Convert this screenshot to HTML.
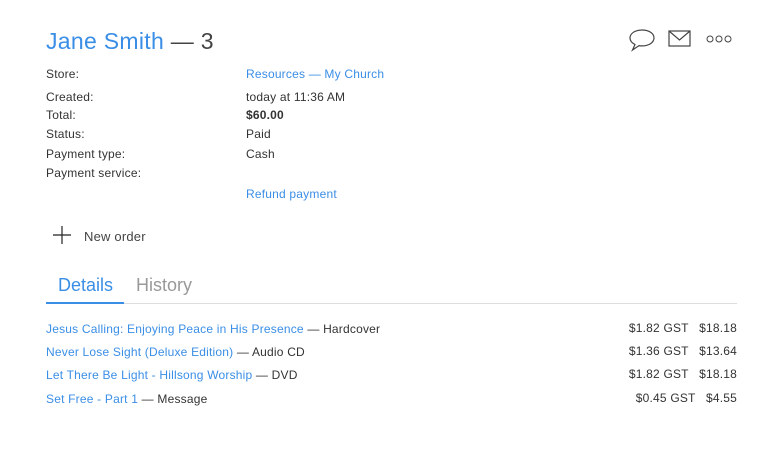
<!DOCTYPE html>
<html><head><style>
body{margin:0;background:#fff;font-family:"Liberation Sans",sans-serif;color:#333;width:783px;height:455px;overflow:hidden;position:relative}
.a{position:absolute;white-space:nowrap}
.b{color:#3a8ee6}
.s{font-size:12px;letter-spacing:0.2px}
</style></head><body>
<div class="a" style="left:46px;top:28px;font-size:23px;letter-spacing:0.3px;color:#444"><span class="b">Jane Smith</span> — 3</div>
<svg class="a" style="left:628px;top:28px" width="28" height="24" viewBox="0 0 28 24"><path d="M14 2C7 2 2 5.5 2 10c0 3 2 5 5 6.5L4.5 22 11 17.6c1 .2 2 .3 3 .3 7 0 12-3.5 12-8S21 2 14 2z" fill="none" stroke="#444" stroke-width="1.2"/></svg>
<svg class="a" style="left:668px;top:30px" width="24" height="18"><rect x="1" y="1" width="21" height="15" fill="none" stroke="#444" stroke-width="1.2"/><path d="M1 1l10.5 9L22 1" fill="none" stroke="#444" stroke-width="1.2"/></svg>
<svg class="a" style="left:706px;top:34px" width="26" height="10"><circle cx="4" cy="5" r="3" fill="none" stroke="#444"/><circle cx="13" cy="5" r="3" fill="none" stroke="#444"/><circle cx="22" cy="5" r="3" fill="none" stroke="#444"/></svg>
<div class="a s" style="left:46px;top:67px">Store:</div><div class="a s b" style="left:246px;top:67px">Resources — My Church</div>
<div class="a s" style="left:46px;top:90px">Created:</div><div class="a s" style="left:246px;top:90px">today at 11:36 AM</div>
<div class="a s" style="left:46px;top:108px">Total:</div><div class="a s" style="left:246px;top:108px;font-weight:bold">$60.00</div>
<div class="a s" style="left:46px;top:127px">Status:</div><div class="a s" style="left:246px;top:127px">Paid</div>
<div class="a s" style="left:46px;top:147px">Payment type:</div><div class="a s" style="left:246px;top:147px">Cash</div>
<div class="a s" style="left:46px;top:166px">Payment service:</div>
<div class="a s b" style="left:246px;top:187px">Refund payment</div>
<svg class="a" style="left:52px;top:225px" width="20" height="20"><path d="M10 1v18M1 10h18" stroke="#222" stroke-width="1.2"/></svg>
<div class="a s" style="left:84px;top:229px;font-size:13px;color:#444">New order</div>
<div class="a b" style="left:58px;top:275px;font-size:18px">Details</div>
<div class="a" style="left:136px;top:275px;font-size:18px;color:#999">History</div>
<div class="a" style="left:46px;top:303px;width:691px;height:1px;background:#ddd"></div>
<div class="a" style="left:46px;top:302px;width:78px;height:2px;background:#3a8ee6"></div>
<div class="a s" style="left:46px;top:322px"><span class="b">Jesus Calling: Enjoying Peace in His Presence</span> — Hardcover</div>
<div class="a s" style="left:46px;top:345px"><span class="b">Never Lose Sight (Deluxe Edition)</span> — Audio CD</div>
<div class="a s" style="left:46px;top:368px"><span class="b">Let There Be Light - Hillsong Worship</span> — DVD</div>
<div class="a s" style="left:46px;top:392px"><span class="b">Set Free - Part 1</span> — Message</div>
<div class="a s" style="right:46px;top:321px;text-align:right">$1.82 GST &nbsp;&nbsp;$18.18</div>
<div class="a s" style="right:46px;top:344px">$1.36 GST &nbsp;&nbsp;$13.64</div>
<div class="a s" style="right:46px;top:367px">$1.82 GST &nbsp;&nbsp;$18.18</div>
<div class="a s" style="right:46px;top:391px">$0.45 GST &nbsp;&nbsp;$4.55</div>
</body></html>
